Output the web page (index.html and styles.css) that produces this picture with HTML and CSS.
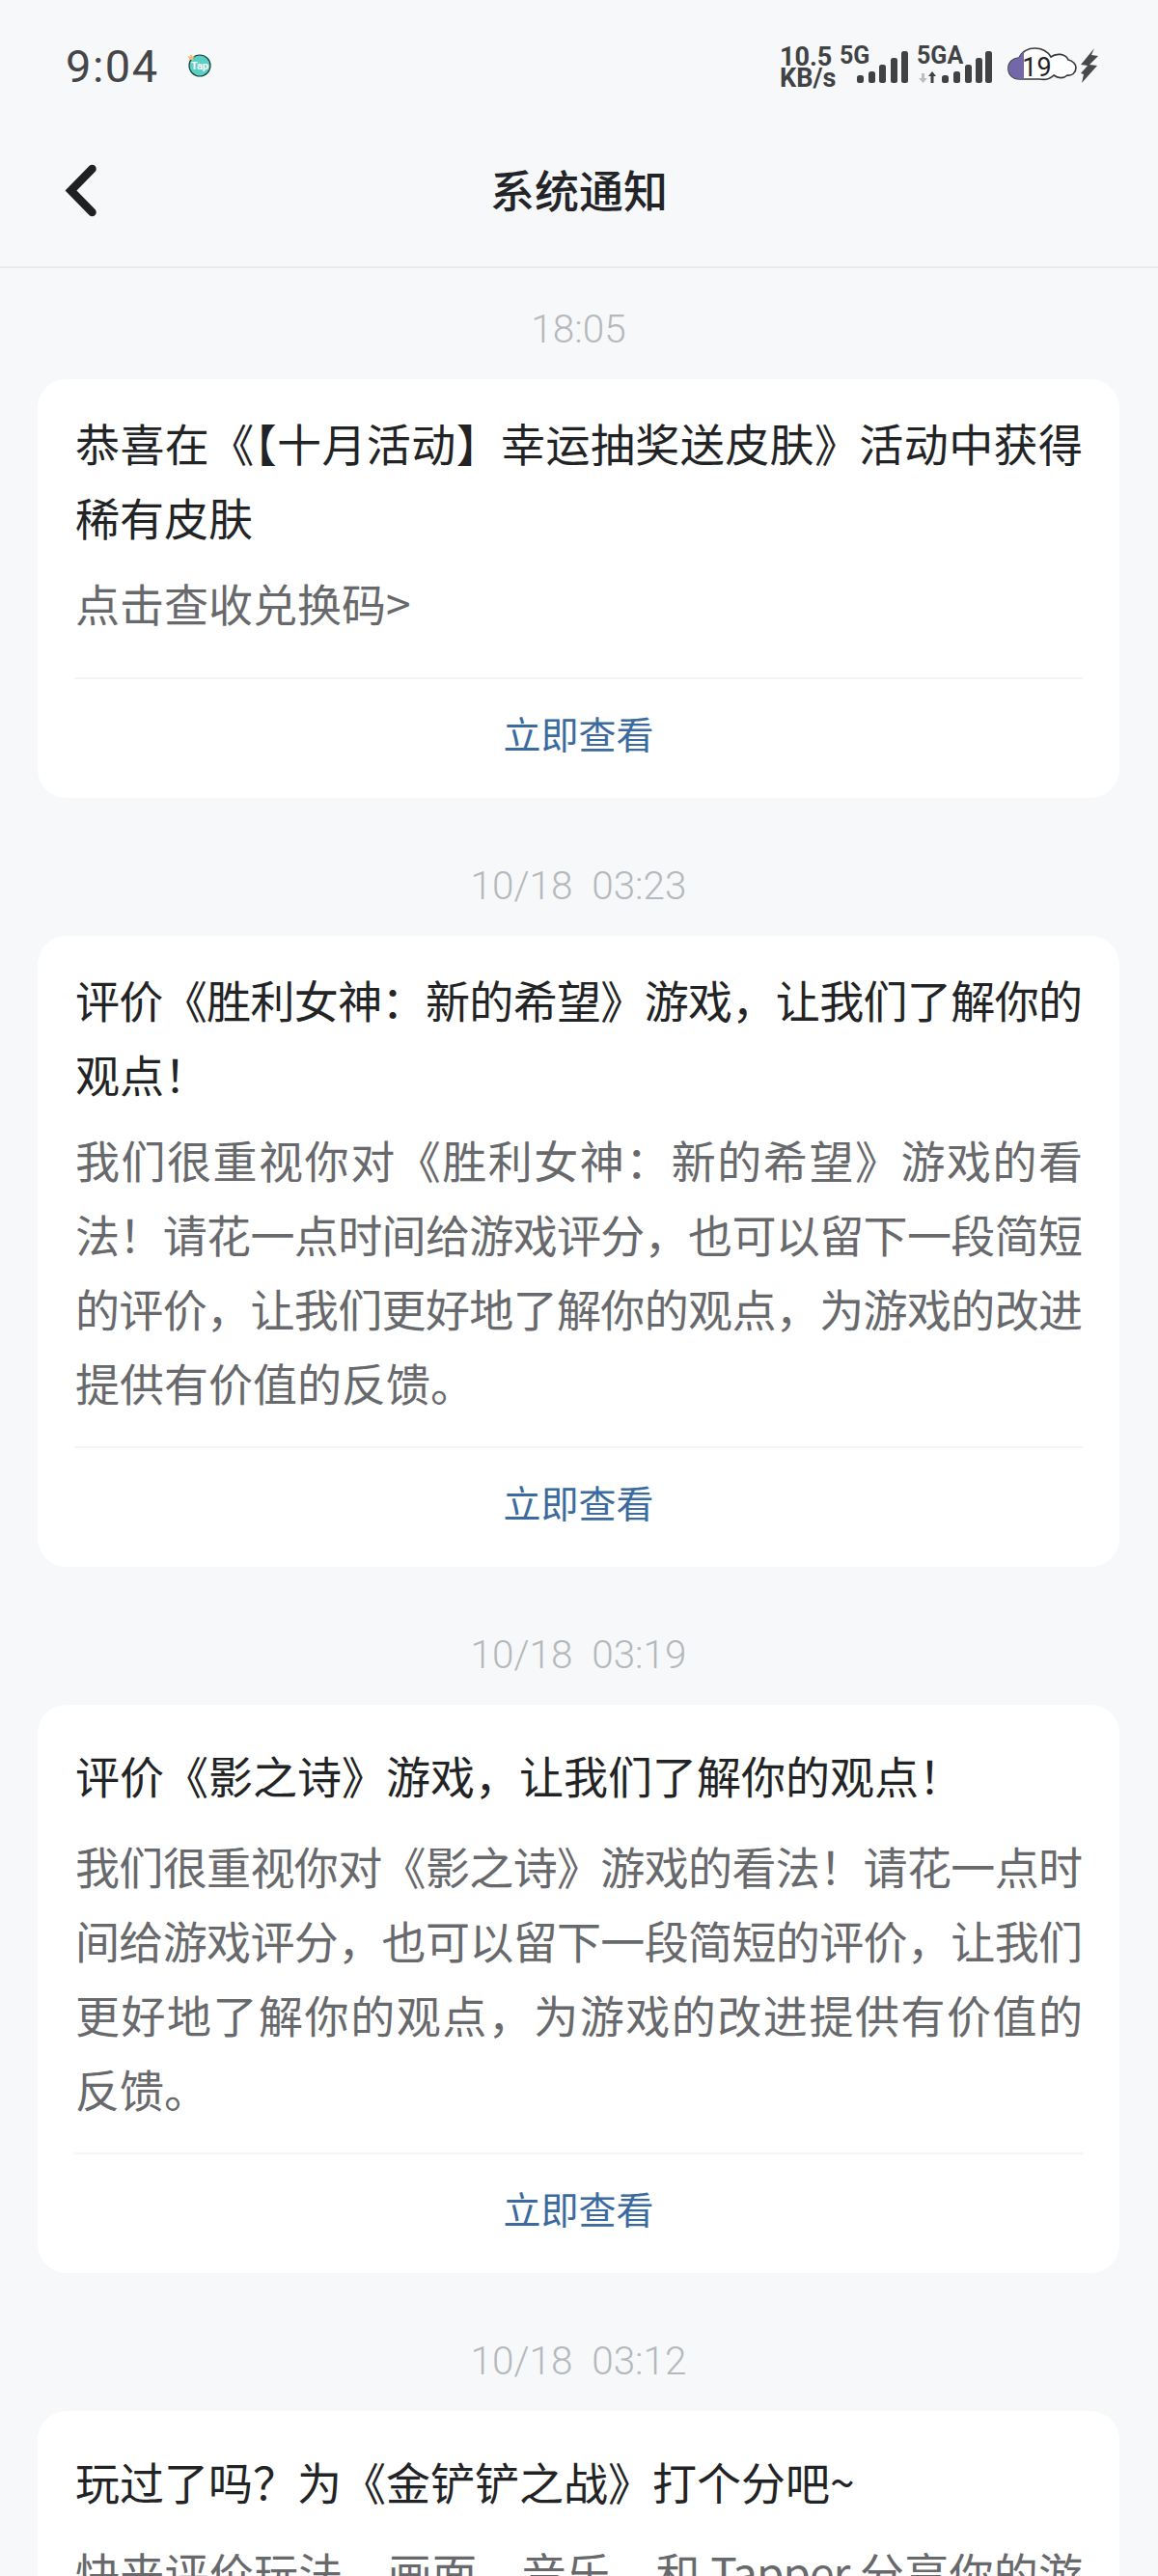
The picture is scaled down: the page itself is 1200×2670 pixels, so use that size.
FILE: index.html
```html
<!DOCTYPE html>
<html lang="zh-CN">
<head>
    <meta charset="UTF-8">
    <title>系统通知</title>
    <link rel="stylesheet" href="styles.css">
</head>
<body>
    <div class="status-bar">
        <span class="clock">9:04</span>
        <svg class="tap-icon" width="26" height="26" viewBox="0 0 26 26">
            <circle cx="13" cy="13" r="11" fill="#5ccfc4" stroke="#17413f" stroke-width="1.2"/>
            <path d="M4 1l1.3 2.2 2.4.4-1.7 1.8.3 2.4L4 6.800 1.700 7.800 2 5.400.3 3.600l2.400-.4z" fill="#f3c07e"/>
            <text x="13" y="17" class="tap-text">Tap</text>
        </svg>
        <div class="status-right">
            <div class="net-speed">10.5<br>KB/s</div>
            <svg class="signal" width="166" height="52" viewBox="0 -4 166 52">
                <text x="0" y="20" class="sim-label">5G</text>
                <g fill="#404244">
                    <rect x="18" y="32" width="7" height="8" rx="2.500"/>
                    <rect x="30" y="28" width="7" height="12" rx="2.500"/>
                    <rect x="41" y="21" width="7" height="19" rx="2.500"/>
                    <rect x="53" y="14" width="7" height="26" rx="2.500"/>
                    <rect x="64" y="7" width="7" height="33" rx="2.500"/>
                </g>
                <text x="80" y="20" class="sim-label">5GA</text>
                <path d="M85 30h3v5h3l-4.500 5-4.500-5h3z" fill="#bdbec0"/>
                <path d="M96 28l4 5h-2.500v7h-3v-7H92z" fill="#404244"/>
                <g fill="#404244">
                    <rect x="106" y="32" width="7" height="8" rx="2.500"/>
                    <rect x="118" y="28" width="7" height="12" rx="2.500"/>
                    <rect x="130" y="21" width="7" height="19" rx="2.500"/>
                    <rect x="141" y="14" width="7" height="26" rx="2.500"/>
                    <rect x="151" y="7" width="7" height="33" rx="2.500"/>
                </g>
            </svg>
            <svg class="cloud" width="72" height="38" viewBox="0 0 72 38">
                <defs>
                    <clipPath id="charge"><rect x="0" y="0" width="17" height="38"/></clipPath>
                </defs>
                <path d="M13 33C5 33 1 28 1 22 1 16 5 12 12 11 15 4 22 1 28 1 36 1 42 5 45 10 50 6 60 6 63 13 68 14 71 18 71 21 71 26 67 30 62 29 58 33 52 32 48 29 44 33 38 34 33 33z" fill="#fff" stroke="#3a3a3c" stroke-width="1.700"/>
                <path d="M13 33C5 33 1 28 1 22 1 16 5 12 12 11 15 4 22 1 28 1 36 1 42 5 45 10 50 6 60 6 63 13 68 14 71 18 71 21 71 26 67 30 62 29 58 33 52 32 48 29 44 33 38 34 33 33z" fill="#7467a8" clip-path="url(#charge)"/>
                <text x="30.500" y="30" class="battery-num">19</text>
            </svg>
            <svg class="bolt" width="22" height="36" viewBox="0 0 22 36">
                <path d="M16 0L2 17l7 1-7 8 3 1-2 9 16-18-8-1 9-9-7-1z" fill="#47494b"/>
            </svg>
        </div>
    </div>

    <div class="nav-bar">
        <svg class="back" width="40" height="64" viewBox="0 0 40 64">
            <path d="M28.500 7L6.500 29.500 28.500 52" fill="none" stroke="#1f2022" stroke-width="8.500" stroke-linecap="round" stroke-linejoin="miter"/>
        </svg>
        <div class="nav-title">系统通知</div>
    </div>

    <div class="list">
        <div class="time">18:05</div>
        <div class="card">
            <div class="card-title">
                <span class="line">恭喜在《【十月活动】幸运抽奖送皮肤》活动中获得</span>
                稀有皮肤
            </div>
            <div class="card-body short">点击查收兑换码&gt;</div>
            <div class="card-link">立即查看</div>
        </div>

        <div class="time">10/18  03:23</div>
        <div class="card">
            <div class="card-title">
                <span class="line">评价《胜利女神：新的希望》游戏，让我们了解你的</span>
                观点！
            </div>
            <div class="card-body">
                <span class="line">我们很重视你对《胜利女神：新的希望》游戏的看</span>
                <span class="line">法！请花一点时间给游戏评分，也可以留下一段简短</span>
                <span class="line">的评价，让我们更好地了解你的观点，为游戏的改进</span>
                提供有价值的反馈。
            </div>
            <div class="card-link">立即查看</div>
        </div>

        <div class="time">10/18  03:19</div>
        <div class="card">
            <div class="card-title single">评价《影之诗》游戏，让我们了解你的观点！</div>
            <div class="card-body">
                <span class="line">我们很重视你对《影之诗》游戏的看法！请花一点时</span>
                <span class="line">间给游戏评分，也可以留下一段简短的评价，让我们</span>
                <span class="line">更好地了解你的观点，为游戏的改进提供有价值的</span>
                反馈。
            </div>
            <div class="card-link">立即查看</div>
        </div>

        <div class="time">10/18  03:12</div>
        <div class="card">
            <div class="card-title single">玩过了吗？为《金铲铲之战》打个分吧~</div>
            <div class="card-body">
                <span class="line">快来评价玩法、画面、音乐，和 Tapper 分享你的游</span>
            </div>
        </div>
    </div>
</body>
</html>
```

FILE: styles.css
```css
html, body {
    margin: 0;
    padding: 0;
    height: 100vh;
    overflow: hidden;
}

body {
    background-color: #f7f8fa;
    font-family: "Noto Sans CJK SC", "Noto Sans", sans-serif;
}

.status-bar {
    display: flex;
    align-items: center;
    box-sizing: border-box;
    height: 117px;
    padding: 19px 60px 0 68px;
}

.clock {
    font-family: "Roboto", sans-serif;
    font-size: 47px;
    color: #444648;
    letter-spacing: 1.5px;
}

.tap-icon {
    margin-left: 29px;
}

.tap-text {
    font-family: "Roboto", sans-serif;
    font-size: 11px;
    font-weight: 700;
    fill: #fff;
    text-anchor: middle;
}

.status-right {
    display: flex;
    align-items: center;
    margin-left: auto;
}

.net-speed {
    font-family: "Roboto", sans-serif;
    font-size: 27px;
    font-weight: 700;
    line-height: 22px;
    color: #404244;
    width: 62px;
    padding-top: 3px;
}

.sim-label {
    font-family: "Roboto", sans-serif;
    font-size: 25px;
    font-weight: 700;
    fill: #404244;
}

.signal {
    margin-right: 8px;
}

.battery-num {
    font-family: "Roboto", sans-serif;
    font-size: 27px;
    font-weight: 400;
    fill: #222;
    text-anchor: middle;
}

.bolt {
    margin-left: 2px;
}

.nav-bar {
    display: flex;
    align-items: center;
    justify-content: center;
    position: relative;
    box-sizing: border-box;
    height: 161px;
    border-bottom: 2px solid #e9eaec;
    padding-bottom: 4px;
}

.back {
    position: absolute;
    left: 67px;
    top: 51px;
}

.nav-title {
    font-size: 46px;
    font-weight: 500;
    color: #232427;
}

.list {
    margin: 0 40px 0 39px;
}

.time {
    height: 50px;
    line-height: 50px;
    margin: 66px 0 27px;
    font-family: "Roboto", sans-serif;
    font-size: 40.500px;
    font-weight: 300;
    color: #b5b8bc;
    text-align: center;
    white-space: pre;
}

.time:first-child {
    margin-top: 38px;
}

.card {
    background-color: #fff;
    border-radius: 30px;
    padding: 27px 39px 0 39px;
}

.card-title {
    font-size: 46px;
    line-height: 77px;
    color: #222325;
}

.card-title.single {
    padding-top: 7px;
    padding-bottom: 5px;
}

.card-body {
    margin-top: 12px;
    font-size: 46px;
    line-height: 77px;
    color: #68696c;
}

.card-body.short {
    padding-bottom: 11px;
}

.line {
    display: block;
    letter-spacing: -1px;
    text-align: justify;
    text-align-last: justify;
}

.card-link {
    margin: 28px -1px 0 -1px;
    height: 125px;
    line-height: 110px;
    border-top: 2px solid #f4f5f6;
    box-sizing: border-box;
    font-size: 39px;
    color: #3b6b9e;
    text-align: center;
}
```
